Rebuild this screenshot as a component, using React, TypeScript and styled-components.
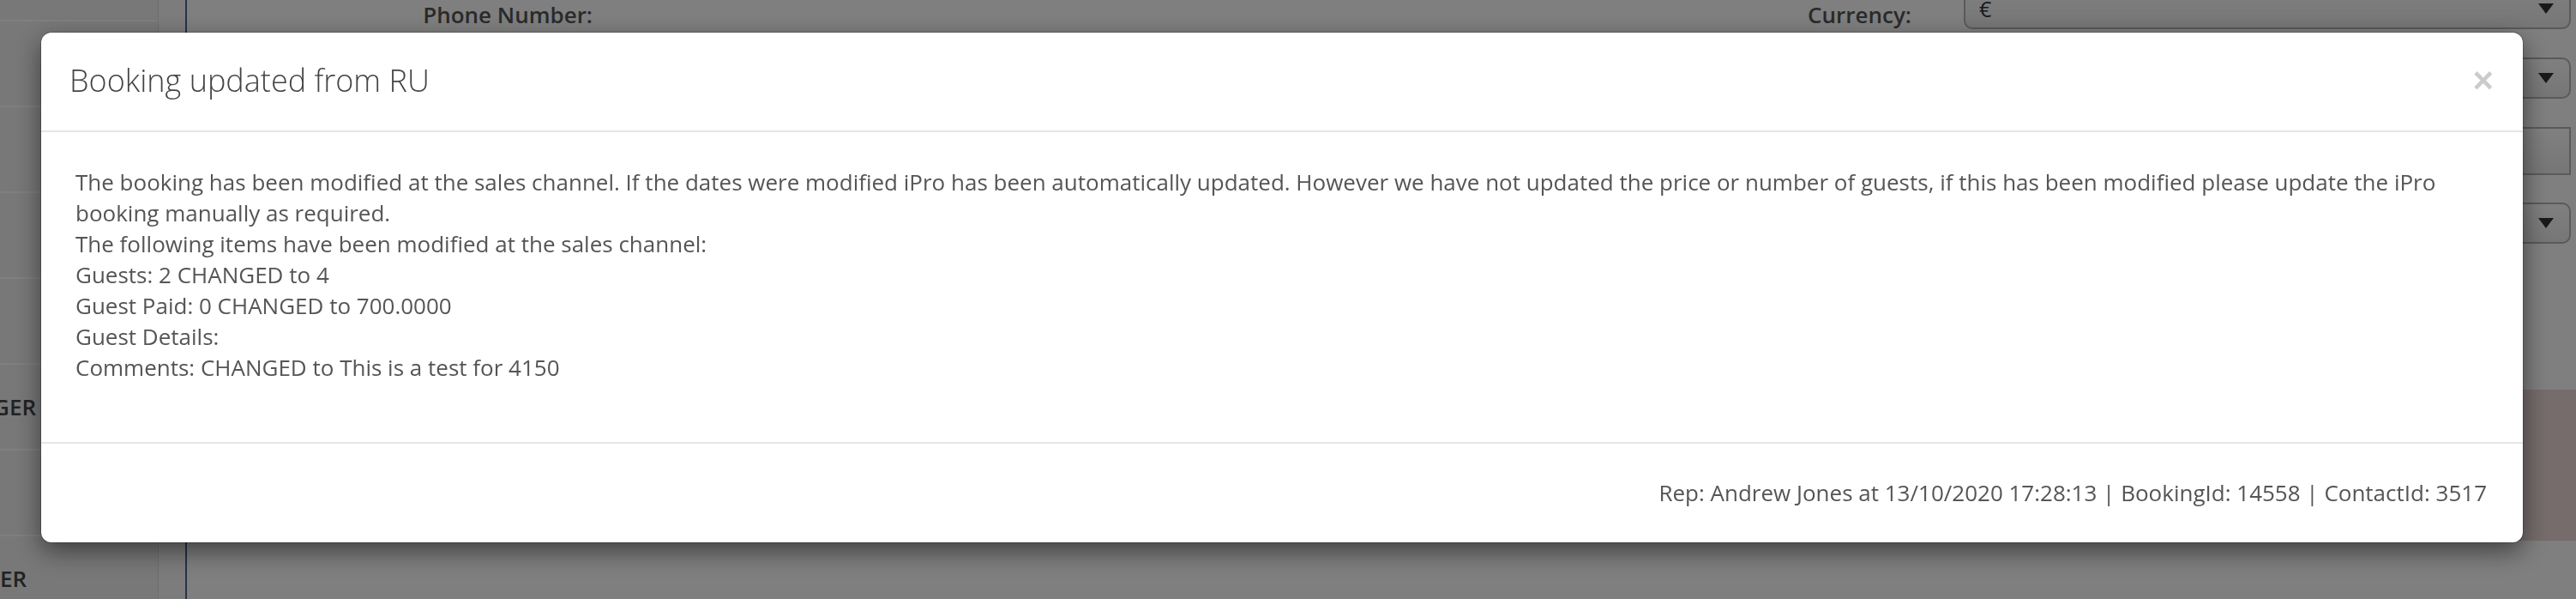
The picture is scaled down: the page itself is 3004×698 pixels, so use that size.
import React from 'react';
import styled, { createGlobalStyle } from 'styled-components';

const GlobalStyle = createGlobalStyle`
  html, body {
    margin: 0;
    padding: 0;
    width: 3004px;
    height: 698px;
    overflow: hidden;
    background: #fff;
    font-family: 'Open Sans', 'Liberation Sans', sans-serif;
  }
`;

const Page = styled.div`
  display: flex;
  width: 3004px;
  height: 698px;
  overflow: hidden;
  background: #fff;
`;

const Sidebar = styled.div`
  width: 184px;
  flex-shrink: 0;
  background: #f1f1f1;
  display: flex;
  flex-direction: column;
  margin-top: -75px;
`;

const NavItem = styled.div<{ $tail: number }>`
  height: 98px;
  flex-shrink: 0;
  border-bottom: 2px solid #ffffff;
  display: flex;
  align-items: center;
  justify-content: flex-end;
  padding-right: ${(p) => p.$tail}px;
  overflow: hidden;
  white-space: nowrap;
  font-size: 26px;
  font-weight: 600;
  color: #444;
`;

const Rail = styled.div`
  width: 31px;
  flex-shrink: 0;
  background: #f9f9f9;
  border-left: 1px solid #dcdcdc;
  border-right: 2px solid #4a6890;
`;

const Main = styled.div`
  flex: 1;
  display: flex;
  flex-direction: column;
  margin-top: -14px;
  padding-right: 7px;
`;

const FormGrid = styled.div`
  display: grid;
  grid-template-columns: 453px 708px 708px 708px;
  column-gap: 61px;
  row-gap: 32px;
  padding-left: 20px;
`;

const Label = styled.div`
  display: flex;
  align-items: flex-start;
  justify-content: flex-end;
  padding-top: 13px;
  font-size: 26px;
  line-height: 36px;
  font-weight: 600;
  color: #555;
`;

const Select = styled.div<{ $tall?: boolean; $square?: boolean }>`
  height: ${(p) => (p.$tall ? 52 : 44)}px;
  border: 2px solid #b4b4b4;
  border-radius: ${(p) => (p.$square ? 0 : 10)}px;
  background: linear-gradient(#ffffff, #ededed);
  display: flex;
  align-items: center;
  justify-content: space-between;
  padding: 0 18px 0 16px;
  font-size: 25px;
  color: #333;
`;

const Caret = styled.span`
  width: 0;
  height: 0;
  border-left: 9px solid transparent;
  border-right: 9px solid transparent;
  border-top: 12px solid #333;
`;

const AlertBlock = styled.div`
  margin-top: 169px;
  height: 176px;
  margin-left: 400px;
  margin-right: -7px;
  background: #ecd8d8;
`;

const Backdrop = styled.div`
  position: fixed;
  inset: 0;
  background: rgba(0, 0, 0, 0.5);
`;

const ModalLayer = styled.div`
  position: fixed;
  inset: 0;
  padding: 38px 62px 0 48px;
`;

const ModalBox = styled.div`
  background: #fff;
  border-radius: 12px;
  box-shadow: 0 0 0 1px rgba(0, 0, 0, 0.2), 0 10px 30px rgba(0, 0, 0, 0.5);
  display: flex;
  flex-direction: column;
  color: #555;
`;

const ModalHeader = styled.div`
  display: flex;
  align-items: center;
  justify-content: space-between;
  padding: 30px 34px 32px 33px;
  border-bottom: 2px solid #e5e5e5;
`;

const ModalTitle = styled.h4`
  margin: 0;
  font-size: 36px;
  line-height: 52px;
  font-weight: 300;
  color: #444;
`;

const CloseButton = styled.button`
  border: 0;
  background: none;
  padding: 0;
  font-family: 'Liberation Sans', Arial, sans-serif;
  font-size: 42px;
  line-height: 1;
  font-weight: 700;
  color: #000;
  opacity: 0.2;
  cursor: pointer;
`;

const ModalBody = styled.div`
  padding: 40px 90px 69px 40px;
  font-size: 26px;
  line-height: 36px;
`;

const ModalFooter = styled.div`
  border-top: 2px solid #e5e5e5;
  padding: 39px 42px 40px;
  text-align: right;
  font-size: 26px;
  line-height: 36px;
`;

const formRows = [
  { label: 'Phone Number:', right: 'Currency:', value: '€' },
  { label: 'Email:', right: 'Source:', value: '' },
  { label: 'Mobile:', right: 'Reference:', value: '', square: true },
  { label: 'Country:', right: 'Status:', value: '' },
];

const navItems = [
  { text: '', tail: 142 },
  { text: '', tail: 142 },
  { text: '', tail: 142 },
  { text: '', tail: 142 },
  { text: '', tail: 142 },
  { text: 'CHANNEL MANAGER', tail: 142 },
  { text: '', tail: 142 },
  { text: 'OWNER', tail: 153 },
];

const changes = [
  'The booking has been modified at the sales channel. If the dates were modified iPro has been automatically updated. However we have not updated the price or number of guests, if this has been modified please update the iPro booking manually as required.',
  'The following items have been modified at the sales channel:',
  'Guests: 2 CHANGED to 4',
  'Guest Paid: 0 CHANGED to 700.0000',
  'Guest Details:',
  'Comments: CHANGED to This is a test for 4150',
];

export default function App() {
  return (
    <>
      <GlobalStyle />
      <Page>
        <Sidebar>
          {navItems.map((item, i) => (
            <NavItem key={i} $tail={item.tail}>
              {item.text}
            </NavItem>
          ))}
        </Sidebar>
        <Rail />
        <Main>
          <FormGrid>
            {formRows.map((row) => (
              <React.Fragment key={row.label}>
                <Label>{row.label}</Label>
                <div />
                <Label>{row.right}</Label>
                <Select $square={row.square} $tall={row.square}>
                  <span>{row.value}</span>
                  {!row.square && <Caret />}
                </Select>
              </React.Fragment>
            ))}
          </FormGrid>
          <AlertBlock />
        </Main>
      </Page>
      <Backdrop />
      <ModalLayer>
        <ModalBox>
          <ModalHeader>
            <ModalTitle>Booking updated from RU</ModalTitle>
            <CloseButton type="button">×</CloseButton>
          </ModalHeader>
          <ModalBody>
            {changes.map((line) => (
              <div key={line}>{line}</div>
            ))}
          </ModalBody>
          <ModalFooter>
            Rep: Andrew Jones at 13/10/2020 17:28:13 | BookingId: 14558 | ContactId: 3517
          </ModalFooter>
        </ModalBox>
      </ModalLayer>
    </>
  );
}
